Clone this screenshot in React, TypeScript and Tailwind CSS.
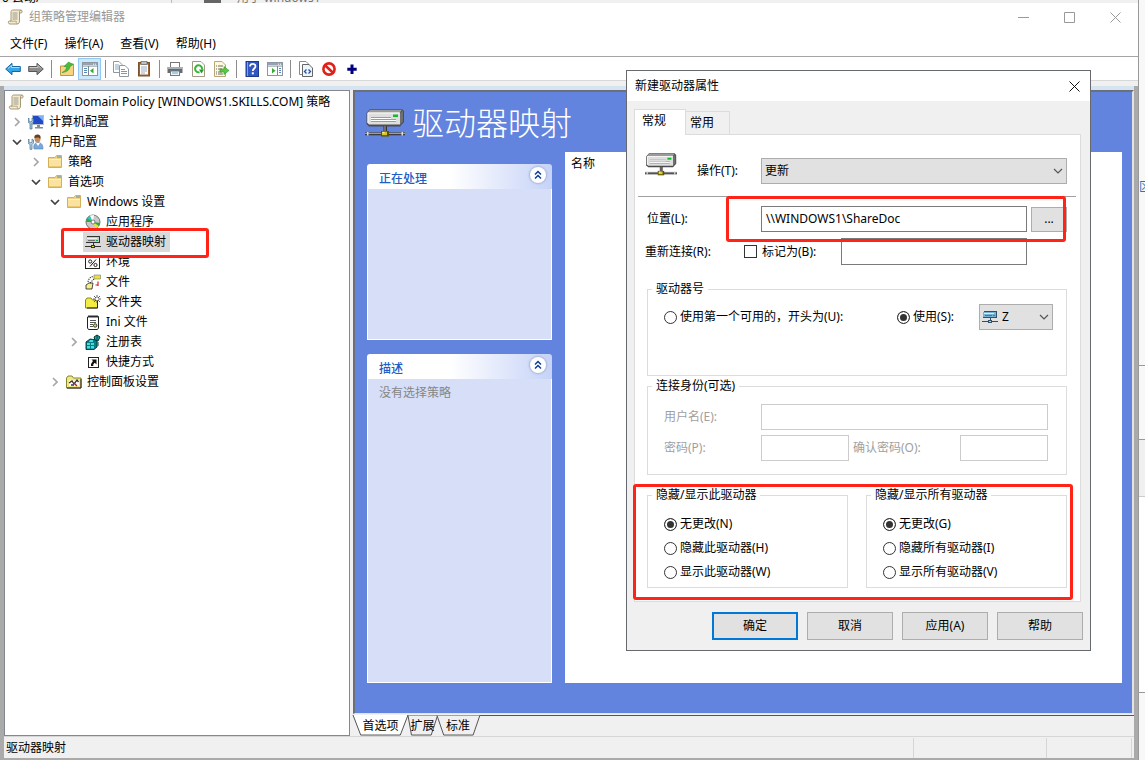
import { useState } from "react";
import type { ReactNode } from "react";

type IconProps = { className?: string };

function DriveIcon({ className = "" }: IconProps) {
  return (
    <svg viewBox="0 0 40 28" className={className} aria-hidden="true">
      <path d="M5 0H37L39 2V13L35 17.5H4L1.5 15V4Z" fill="#4c4c4c" />
      <path d="M5 .7H37L34.5 4H2.5Z" fill="#9b9b9b" />
      <path d="M2.5 3.5H35V15.5H4L2.5 14Z" fill="#dedede" />
      <path d="M35 4L38 1.5V12.5L35 16Z" fill="#6f6f6f" />
      <path d="M3 4H34.5" stroke="#fafafa" strokeWidth="1" />
      <path d="M3 4V14" stroke="#fafafa" strokeWidth="1" />
      <path d="M6 8.5H26M6 10.5H31M6 12.5H31" stroke="#9c9c9c" strokeWidth="1" />
      <path d="M6 9.5H26M6 11.5H31" stroke="#fff" strokeWidth="1" />
      <rect x="28" y="5.5" width="5" height="2.5" fill="#0bbf2b" />
      <rect x="18.5" y="17" width="3.5" height="6" fill="#333" />
      <rect x="19.5" y="17" width="1" height="6" fill="#aaa" />
      <rect x="0" y="23.3" width="40" height="3" fill="#3d3d3d" />
      <rect x="0" y="23.8" width="40" height="1.1" fill="#a9a9a9" />
      <rect x="2" y="23" width="1.5" height="3.5" fill="#ddd" />
      <rect x="36.5" y="23" width="1.5" height="3.5" fill="#ddd" />
      <rect x="16" y="22" width="8" height="5.5" fill="#5c5200" />
      <rect x="17" y="22.7" width="5" height="3.5" fill="#d8c52a" />
      <rect x="17.5" y="23" width="2" height="1.2" fill="#fbf4a0" />
    </svg>
  );
}

function SmallDriveIcon({ className = "", tint = "#c8c8c8", edge = "#333" }: IconProps & { tint?: string; edge?: string }) {
  return (
    <svg viewBox="0 0 16 16" className={className} shapeRendering="crispEdges" aria-hidden="true">
      <path d="M2 2H15V8L14 9H1V3Z" fill={edge} />
      <path d="M1 3H14V8H1Z" fill={tint} />
      <path d="M2 4H12V5H2Z" fill="#fff" opacity=".75" />
      <path d="M3 6H10V7H3Z" fill={edge} opacity=".6" />
      <rect x="11" y="6" width="2" height="1" fill="#0a4" />
      <rect x="8" y="9" width="1" height="3" fill={edge} />
      <rect x="0" y="12" width="16" height="1" fill={edge} />
      <path d="M6 11H10V14H6Z" fill={edge} />
      <rect x="7" y="12" width="2" height="1" fill="#e8e020" />
    </svg>
  );
}

function ScrollIcon({ className = "" }: IconProps) {
  return (
    <svg viewBox="0 0 16 16" className={className} aria-hidden="true">
      <path d="M4 2.5C4 1.5 5 1 6 1H14C15.5 1 15.5 4 14 4H12.5V12C12.5 14 11.5 15 10 15H3C1 15 .7 12 2.5 12H4Z" fill="#f4ecd0" stroke="#9c8f6c" strokeWidth=".9" />
      <path d="M12.5 4V2.5C12.5 1.5 14 1 14.5 2" fill="none" stroke="#9c8f6c" strokeWidth=".8" />
      <path d="M5.5 4H10.5M5.5 6H10.5M5.5 8H10.5M5.5 10H10.5" stroke="#8f9087" strokeWidth=".9" />
      <path d="M3 12.2H9.3C9 13.5 9.3 14.7 10.5 14.8" fill="none" stroke="#b2a57e" strokeWidth=".9" />
    </svg>
  );
}

function FolderIcon({ className = "" }: IconProps) {
  return (
    <svg viewBox="0 0 16 16" className={className} aria-hidden="true">
      <path d="M1.5 3.5H8L9.5 1.5H14.5V13.5H1.5Z" fill="#f3d384" stroke="#d3b05c" />
      <path d="M10 3H14" stroke="#4a90c8" />
      <path d="M2 5H14V13H2Z" fill="#fae2a0" />
      <path d="M2 5.5H14" stroke="#fff2c8" />
      <path d="M2 12.5H14" stroke="#edc76d" />
    </svg>
  );
}

function ComputerIcon({ className = "" }: IconProps) {
  return (
    <svg viewBox="0 0 16 16" className={className} aria-hidden="true">
      <rect x="4.5" y="1.5" width="11" height="9" fill="#2149c8" stroke="#b4bfce" />
      <path d="M10 2L15 2V7Z" fill="#7eb2f5" />
      <path d="M9 11H12V13H15V14.5H7V13H9Z" fill="#7f8c9c" />
      <path d="M1 4V7L3 8L4 7V4L5.5 5V8L4 9.5V15H2V9.5L0 8V5Z" fill="#9fc3dc" stroke="#47718f" strokeWidth=".7" />
    </svg>
  );
}

function UserIcon({ className = "" }: IconProps) {
  return (
    <svg viewBox="0 0 16 16" className={className} aria-hidden="true">
      <path d="M6 15C5 9 8 9 10 8.5C14 9 15 11 15 15Z" fill="#78a9d8" stroke="#4d7fb1" strokeWidth=".6" />
      <ellipse cx="9.5" cy="4.8" rx="3" ry="3.6" fill="#c68e61" />
      <path d="M6.4 4C6 1 8 .5 10 .5C13 .7 13 4 12 5C11 3 9 3.5 6.4 4Z" fill="#604126" />
      <path d="M8 9L10 12L12 9Z" fill="#fff" />
      <path d="M1 5V8L3 9L4 8V5L5.5 6V9L4 10.5V15.3H2V10.5L0 9V6Z" fill="#b1d2e7" stroke="#47718f" strokeWidth=".7" />
    </svg>
  );
}

function DiscIcon({ className = "" }: IconProps) {
  return (
    <svg viewBox="0 0 16 16" className={className} aria-hidden="true">
      <circle cx="8" cy="8" r="7" fill="#c9c9c9" stroke="#555" strokeWidth=".8" />
      <path d="M8 8L2 4L5 1.5Z" fill="#23c7c1" />
      <path d="M8 8L5 1.5L9 1Z" fill="#fff" />
      <path d="M8 8L1 8L2 4Z" fill="#31aa3a" />
      <path d="M8 8L14 12L11 14.5Z" fill="#e8e62a" />
      <path d="M8 8L15 9L14 12Z" fill="#27a83b" />
      <circle cx="8" cy="8" r="2" fill="#fff" stroke="#666" strokeWidth=".8" />
    </svg>
  );
}

function EnvIcon({ className = "" }: IconProps) {
  return (
    <svg viewBox="0 0 16 16" className={className} shapeRendering="crispEdges" aria-hidden="true">
      <path d="M0 1H15V15H0Z" fill="#222" />
      <path d="M0 1H14V3H0Z" fill="#1d2f91" />
      <path d="M1 4H14V14H1Z" fill="#fff" />
      <path d="M5 12.5L11 5.5" stroke="#111" strokeWidth="1" shapeRendering="auto" />
      <circle cx="5.2" cy="7.5" r="1.6" fill="none" stroke="#111" strokeWidth=".9" shapeRendering="auto" />
      <circle cx="10.5" cy="11" r="1.6" fill="none" stroke="#111" strokeWidth=".9" shapeRendering="auto" />
    </svg>
  );
}

function FileIcon({ className = "" }: IconProps) {
  return (
    <svg viewBox="0 0 16 16" className={className} aria-hidden="true">
      <path d="M9 1H15.5V5H9Z" fill="#e8e33a" stroke="#777" strokeWidth=".6" />
      <path d="M1 11L4 9H8L7 15H1Z" fill="#f2ef96" stroke="#222" strokeWidth=".8" />
      <path d="M3 8C4 4 6 2 9 3M5 9L9 5" fill="none" stroke="#333" strokeWidth="1.1" strokeDasharray="1.2 1" />
      <path d="M10.5 11H13M13 7.5V12" stroke="#d9232b" strokeWidth="1.2" />
    </svg>
  );
}

function NewFolderIcon({ className = "" }: IconProps) {
  return (
    <svg viewBox="0 0 16 16" className={className} aria-hidden="true">
      <path d="M.5 6L2 4H6L7.5 6H12.5V14H.5Z" fill="#f2ec43" stroke="#7f7a20" strokeWidth=".9" />
      <path d="M12.5 7V14H2" fill="none" stroke="#222" />
      <path d="M12 1V9M8 5H16M9 2L15 8M15 2L9 8" stroke="#333" strokeWidth=".8" />
      <circle cx="12" cy="5" r="1.3" fill="#fff" />
    </svg>
  );
}

function IniIcon({ className = "" }: IconProps) {
  return (
    <svg viewBox="0 0 16 16" className={className} aria-hidden="true">
      <path d="M3 2.5H13.5V14L12.5 15.5H3.5L2.5 14V3Z" fill="#fff" stroke="#222" />
      <path d="M4 1V4M6 1V4M8 1V4M10 1V4M12 1V4" stroke="#333" />
      <path d="M5 6.5H11M5 8.5H11M5 10.5H8M5 12.5H8" stroke="#444" strokeWidth=".9" />
      <circle cx="10.2" cy="11.5" r="1.7" fill="#e3dd2a" stroke="#333" />
    </svg>
  );
}

function RegistryIcon({ className = "" }: IconProps) {
  return (
    <svg viewBox="0 0 16 16" className={className} aria-hidden="true">
      <path d="M1 8L5 5L12 6V13L9 15.5H1Z" fill="#087f86" stroke="#033" strokeWidth=".9" />
      <path d="M2 9H5V11H2ZM6 9H9V11H6ZM2 12H5V14.5H2ZM6 12H9V14.5H6ZM5 6H8V8H4Z" fill="#43dede" />
      <path d="M9 3L12 1L15 3L13 7L10 6Z" fill="#18a9ad" stroke="#033" />
      <path d="M12 1V6M13 8V12" stroke="#0c3b3b" />
    </svg>
  );
}

function ShortcutIcon({ className = "" }: IconProps) {
  return (
    <svg viewBox="0 0 16 16" className={className} aria-hidden="true">
      <rect x="3.5" y="3.5" width="10" height="10" fill="#fff" stroke="#222" />
      <path d="M6.5 5.5H11.5V10.5L9.8 8.8L8.3 10.3V12H6V10L8 7Z" fill="#111" />
    </svg>
  );
}

function ControlFolderIcon({ className = "" }: IconProps) {
  return (
    <svg viewBox="0 0 16 16" className={className} aria-hidden="true">
      <path d="M.5 4L2 2H6L7.5 4H15V14H.5Z" fill="#efe981" stroke="#8a8434" />
      <path d="M15 5V14H1" fill="none" stroke="#222" />
      <path d="M3 6.5H13V12H3Z" fill="#fff" />
      <path d="M3 9L6 7L8 10L11 6L12.5 8" fill="none" stroke="#333" strokeWidth="1.3" />
      <path d="M8 9L11 12" stroke="#b42438" strokeWidth="1.5" />
      <path d="M5 11H8" stroke="#24318d" strokeWidth="1.5" />
    </svg>
  );
}

function Chevron({ className = "" }: IconProps) {
  return (
    <svg viewBox="0 0 10 6" className={className} aria-hidden="true">
      <path d="M1 1L5 5L9 1" fill="none" stroke="#555" strokeWidth="1.2" />
    </svg>
  );
}

function ToolSvg({ children }: { children: ReactNode }) {
  return (
    <svg viewBox="0 0 16 16" className="h-4 w-4" aria-hidden="true">
      {children}
    </svg>
  );
}

const panelDrawing = (flip: boolean) => (
  <ToolSvg>
    <rect x=".5" y="1.5" width="15" height="13" fill="#fff" stroke="#8d97a0" />
    <rect x="1" y="2" width="14" height="2.5" fill="#97a3af" />
    <path d="M11 3.2H12M13 3.2H14" stroke="#fff" />
    <path d="M1 5.5H15" stroke="#b5c0c9" />
    {flip ? (
      <>
        <path d="M10.5 5V14" stroke="#7d8790" />
        <path d="M12 7.5H14M12 9.5H14M12 11.5H14" stroke="#5787b8" />
        <path d="M5 7L8.5 9.8L5 12.5Z" fill="#36a936" />
      </>
    ) : (
      <>
        <path d="M6.5 5V14" stroke="#7d8790" />
        <path d="M2 7.5H5M2 9.5H5M2 11.5H5" stroke="#5787b8" />
        <path d="M11.5 7L8 9.8L11.5 12.5Z" fill="#36a936" />
      </>
    )}
  </ToolSvg>
);

const toolGroups: { label: string; active?: boolean; icon: ReactNode }[][] = [
  [
    {
      label: "后退",
      icon: (
        <ToolSvg>
          <path d="M.7 8L7 2.3V5.5H15.3V10.5H7V13.7Z" fill="#35a6e8" stroke="#1a669f" />
          <path d="M3 7.5L6.5 4.5V6.5H14.5" fill="none" stroke="#9ddcff" />
        </ToolSvg>
      ),
    },
    {
      label: "前进",
      icon: (
        <ToolSvg>
          <path d="M15.3 8L9 2.3V5.5H.7V10.5H9V13.7Z" fill="#8c8c8c" stroke="#565656" />
          <path d="M1.5 6.5H10V4.5L13 7.5" fill="none" stroke="#c9c9c9" />
        </ToolSvg>
      ),
    },
  ],
  [
    {
      label: "上一级",
      icon: (
        <ToolSvg>
          <path d="M1.5 5H7L8.5 3H14.5V14.5H1.5Z" fill="#f5d583" stroke="#bc9746" />
          <path d="M3 11.5C7 10 7.5 7 7.5 5.5H5L9.5 1L14 3.5L11 5.5C10.5 9 8 11 3 11.5Z" fill="#47bd38" stroke="#28882a" strokeWidth=".5" />
        </ToolSvg>
      ),
    },
    { label: "显示/隐藏控制台树", active: true, icon: panelDrawing(false) },
  ],
  [
    {
      label: "复制",
      icon: (
        <ToolSvg>
          <path d="M.5 .5H6L9 3.5V11.5H.5Z" fill="#fff" stroke="#8c98a3" />
          <path d="M2 4H6M2 6H7M2 8H6" stroke="#7c9dbb" strokeWidth=".9" />
          <path d="M6.5 4.5H12L15.5 8V15.5H6.5Z" fill="#fff" stroke="#8c98a3" />
          <path d="M8 8.5H12M8 10.5H14M8 12.5H14" stroke="#6c9bc8" />
        </ToolSvg>
      ),
    },
    {
      label: "粘贴",
      icon: (
        <ToolSvg>
          <rect x="2.5" y="1.5" width="11" height="13.5" fill="#9a6330" stroke="#7d522a" />
          <rect x="4" y="3.5" width="8" height="10" fill="#fff" />
          <rect x="5" y=".5" width="6" height="3" fill="#c0c0c0" stroke="#666" strokeWidth=".7" />
          <path d="M5 6H11M5 8H11M5 10H11M5 12H9" stroke="#8ba4bd" strokeWidth=".9" />
        </ToolSvg>
      ),
    },
  ],
  [
    {
      label: "打印",
      icon: (
        <ToolSvg>
          <rect x="3.5" y="1.5" width="9" height="5" fill="#fff" stroke="#777" />
          <path d="M.5 6H15.5V12H.5Z" fill="#666b70" />
          <path d="M1 6H15V8H1Z" fill="#a6adb3" />
          <rect x="3.5" y="10" width="9" height="4.5" fill="#eef6fb" stroke="#777" />
          <path d="M5 12H11" stroke="#52a6d4" />
        </ToolSvg>
      ),
    },
    {
      label: "刷新",
      icon: (
        <ToolSvg>
          <path d="M2.5 .5H11L14.5 4V15.5H2.5Z" fill="#fff" stroke="#a49b85" />
          <path d="M9.5 11.2A3.5 3.5 0 1 1 12 8.5" fill="none" stroke="#35b634" strokeWidth="2" />
          <path d="M9 8.5H14L11.5 12.5Z" fill="#259b29" />
        </ToolSvg>
      ),
    },
    {
      label: "导出列表",
      icon: (
        <ToolSvg>
          <path d="M1.5 .5H9L12.5 4V15.5H1.5Z" fill="#fff9dc" stroke="#b4a77a" />
          <path d="M3 5H4M5 5H10M3 8H4M5 8H9M3 11H4M5 11H9M3 13H4M5 13H10" stroke="#6d6d6d" />
          <path d="M7 8H11V5.5L16 9.5L11 13.5V11H7Z" fill="#5bc744" stroke="#34972c" strokeWidth=".6" />
        </ToolSvg>
      ),
    },
  ],
  [
    {
      label: "帮助主题",
      icon: (
        <ToolSvg>
          <rect x="2" y=".5" width="12.5" height="15" fill="#3058c2" stroke="#1d3a92" />
          <path d="M3.5 1V15" stroke="#7ea0ee" />
          <path d="M6 5.5C6 2 11.5 2.3 11.5 5.3C11.5 7.5 8.8 7.5 8.8 10" fill="none" stroke="#fff" strokeWidth="1.8" />
          <rect x="7.8" y="11.3" width="2" height="2" fill="#fff" />
        </ToolSvg>
      ),
    },
    { label: "显示/隐藏操作窗格", icon: panelDrawing(true) },
  ],
  [
    {
      label: "查看 XML",
      icon: (
        <ToolSvg>
          <path d="M1.5 .5H8L11 3.5V13.5H1.5Z" fill="#fff" stroke="#888" />
          <path d="M4.5 3.5H11L14.5 7V15.5H4.5Z" fill="#eef4fc" stroke="#666" />
          <path d="M8.5 8.5L6.5 10.5L8.5 12.5M10.5 8.5L12.5 10.5L10.5 12.5" fill="none" stroke="#2450a8" strokeWidth="1.3" />
        </ToolSvg>
      ),
    },
    {
      label: "停止",
      icon: (
        <ToolSvg>
          <circle cx="8" cy="8" r="5.6" fill="#fff" stroke="#e02118" strokeWidth="2.6" />
          <path d="M4 4.3L12 11.7" stroke="#e02118" strokeWidth="2.6" />
        </ToolSvg>
      ),
    },
    {
      label: "新建",
      icon: (
        <ToolSvg>
          <path d="M8 3.5V13M3.3 8.2H12.7" stroke="#00007f" strokeWidth="3" />
        </ToolSvg>
      ),
    },
  ],
];

type Node = {
  label: string;
  level: 1 | 2 | 3 | 4;
  state?: "open" | "closed";
  selected?: boolean;
  Icon: (p: IconProps) => ReactNode;
};

const nodes: Node[] = [
  { label: "计算机配置", level: 1, state: "closed", Icon: ComputerIcon },
  { label: "用户配置", level: 1, state: "open", Icon: UserIcon },
  { label: "策略", level: 2, state: "closed", Icon: FolderIcon },
  { label: "首选项", level: 2, state: "open", Icon: FolderIcon },
  { label: "Windows 设置", level: 3, state: "open", Icon: FolderIcon },
  { label: "应用程序", level: 4, Icon: DiscIcon },
  { label: "驱动器映射", level: 4, selected: true, Icon: SmallDriveIcon },
  { label: "环境", level: 4, Icon: EnvIcon },
  { label: "文件", level: 4, Icon: FileIcon },
  { label: "文件夹", level: 4, Icon: NewFolderIcon },
  { label: "Ini 文件", level: 4, Icon: IniIcon },
  { label: "注册表", level: 4, state: "closed", Icon: RegistryIcon },
  { label: "快捷方式", level: 4, Icon: ShortcutIcon },
  { label: "控制面板设置", level: 3, state: "closed", Icon: ControlFolderIcon },
];

const indent = { 1: "pl-1", 2: "pl-[23px]", 3: "pl-[42px]", 4: "pl-[61px]" };

function TreeRow({ node }: { node: Node }) {
  return (
    <li className={`relative flex h-5 items-center ${indent[node.level]}`}>
      <span className="mr-px flex w-4 shrink-0 justify-center">
        {node.state === "open" && (
          <svg viewBox="0 0 10 6" className="h-1.5 w-2.5" aria-hidden="true">
            <path d="M1 1L5 5L9 1" fill="none" stroke="#404040" strokeWidth="1.7" />
          </svg>
        )}
        {node.state === "closed" && (
          <svg viewBox="0 0 6 10" className="h-2.5 w-1.5" aria-hidden="true">
            <path d="M1 1L5 5L1 9" fill="none" stroke="#a6a6a6" strokeWidth="1.6" />
          </svg>
        )}
      </span>
      <span className={`flex h-5 items-center gap-1 whitespace-nowrap pl-0.5 pr-1 ${node.selected ? "bg-[#d9d9d9]" : ""}`}>
        <node.Icon className="h-4 w-4" />
        <span className="pl-px">{node.label}</span>
      </span>
      {node.selected && (
        <span className="pointer-events-none absolute -top-1 left-14 z-10 h-[30px] w-[148px] rounded-[3px] border-3 border-[#ff2318]" />
      )}
    </li>
  );
}

function InfoPanel({ title, children, className = "" }: { title: string; children?: ReactNode; className?: string }) {
  return (
    <section className={`flex flex-col ${className}`}>
      <header className="flex h-[25px] items-start justify-between rounded-t-[3px] bg-linear-to-r from-white from-45% to-[#c6d3f7] pl-3 pr-1.5 pt-[3px]">
        <h2 className="pt-1 font-medium text-[#215dc6]">{title}</h2>
        <button aria-label={`折叠${title}`} className="flex h-4 w-4 items-center justify-center rounded-full bg-white shadow-[0_0_2px_1px_#a5b3d6]">
          <svg viewBox="0 0 10 10" className="h-2.5 w-2.5" aria-hidden="true">
            <path d="M2 4.5L5 1.5L8 4.5M2 8.5L5 5.5L8 8.5" fill="none" stroke="#0c3d9b" strokeWidth="1.5" />
          </svg>
        </button>
      </header>
      <div className="flex-1 border border-t-0 border-white bg-[#d6dff7] px-[11px] py-1 text-[#868686]">{children}</div>
    </section>
  );
}

function Radio({ id, name, label, checked, className = "" }: { id: string; name: string; label: string; checked?: boolean; className?: string }) {
  return (
    <div className={`flex items-center gap-[3px] whitespace-nowrap ${className}`}>
      <input
        id={id}
        type="radio"
        name={name}
        defaultChecked={checked}
        className="h-[13px] w-[13px] shrink-0 appearance-none rounded-full border border-[#333] bg-white checked:bg-[#333] checked:shadow-[inset_0_0_0_2px_white]"
      />
      <label htmlFor={id}>{label}</label>
    </div>
  );
}

const fieldset = "min-w-0 border border-[#dcdcdc]";
const legend = "ml-1 h-4 px-1 leading-4";
const textInput = "border bg-white px-1 outline-none";

function DriveDialog() {
  const [tab, setTab] = useState(0);
  return (
    <div role="dialog" aria-labelledby="dialog-title" className="absolute left-[626px] top-[70px] w-[465px] border border-[#666a6e] bg-[#f0f0f0]">
      <div className="flex h-[30px] items-center justify-between bg-white pl-2 pr-2.5">
        <h2 id="dialog-title">新建驱动器属性</h2>
        <button aria-label="关闭">
          <svg viewBox="0 0 11 11" className="h-[11px] w-[11px]" aria-hidden="true">
            <path d="M.5 .5L10.5 10.5M10.5 .5L.5 10.5" stroke="#111" />
          </svg>
        </button>
      </div>

      <div role="tablist" className="flex items-end pl-[7px] pt-2">
        {["常规", "常用"].map((name, i) => (
          <button
            key={name}
            role="tab"
            aria-selected={tab === i}
            onClick={() => setTab(i)}
            className={
              tab === i
                ? "relative z-10 -mb-px h-[26px] w-[52px] border border-b-0 border-[#dcdcdc] bg-white pb-1 pl-[7px] text-left"
                : "h-[23px] w-11 border border-b-0 border-l-0 border-[#dcdcdc] bg-[#f0f0f0] pl-1 text-left"
            }
          >
            {name}
          </button>
        ))}
      </div>

      <div className="ml-[7px] mr-[9px] border border-[#dcdcdc] bg-white pb-[13px]">
        <div className="flex h-[61px] items-center pl-2.5 pr-[13px] pt-2.5">
          <DriveIcon className="mb-3 h-[23px] w-8" />
          <label htmlFor="action" className="ml-5 w-16">操作(T):</label>
          <div className="relative flex-1">
            <select id="action" className="h-[26px] w-full appearance-none border border-[#adadad] bg-[#e1e1e1] pl-[3px]">
              <option>更新</option>
            </select>
            <Chevron className="pointer-events-none absolute right-1 top-2.5 h-1.5 w-2.5" />
          </div>
        </div>
        <hr className="ml-[3px] mr-1 border-[#a0a0a0]" />

        <div className="relative flex items-center pl-2.5 pr-[13px] pt-[9px]">
          <label htmlFor="location" className="w-[116px] pl-0.5">位置(L):</label>
          <input id="location" defaultValue="\\WINDOWS1\ShareDoc" className={`h-[26px] w-[266px] border-[#7a7a7a] pb-0.5 ${textInput}`} />
          <button className="ml-1 h-[25px] flex-1 border border-[#adadad] bg-[#e1e1e1]">...</button>
          <span className="pointer-events-none absolute -top-px left-[91px] z-10 h-[46px] w-[340px] rounded-[3px] border-3 border-[#ff2318]" />
        </div>

        <div className="flex items-center pl-2.5 pt-1.5">
          <span className="w-[99px]">重新连接(R):</span>
          <input id="mark" type="checkbox" aria-label="标记" className="h-[13px] w-[13px] appearance-none border border-[#333] bg-white checked:bg-[#333]" />
          <label htmlFor="mark-text" className="w-[84px] pl-[5px]">标记为(B):</label>
          <input id="mark-text" className={`h-[27px] w-[186px] border-[#7a7a7a] ${textInput}`} />
        </div>

        <fieldset className={`ml-3 mr-[13px] mt-4 h-[95px] ${fieldset}`}>
          <legend className={legend}>驱动器号</legend>
          <div className="flex items-center pl-4 pt-[7px]">
            <Radio id="first" name="letter" label="使用第一个可用的，开头为(U):" className="w-[233px]" />
            <Radio id="use" name="letter" label="使用(S):" checked className="w-[82px]" />
            <div className="relative">
              <select aria-label="驱动器号" className="h-[26px] w-[74px] appearance-none border border-[#adadad] bg-[#e1e1e1] pl-[22px]">
                <option>Z</option>
              </select>
              <SmallDriveIcon tint="#79b2d2" edge="#2b5268" className="pointer-events-none absolute left-[3px] top-[5px] h-4 w-4" />
              <Chevron className="pointer-events-none absolute right-1 top-2.5 h-1.5 w-2.5" />
            </div>
          </div>
        </fieldset>

        <fieldset disabled className={`ml-3 mr-[13px] mt-0.5 h-[97px] text-[#a0a0a0] ${fieldset}`}>
          <legend className={`text-black ${legend}`}>连接身份(可选)</legend>
          <div className="flex items-center pl-4 pt-2.5">
            <label htmlFor="user" className="w-[97px]">用户名(E):</label>
            <input id="user" className={`h-[26px] w-[287px] border-[#ccc] ${textInput}`} />
          </div>
          <div className="flex items-center pl-4 pt-[5px]">
            <label htmlFor="pw" className="w-[97px]">密码(P):</label>
            <input id="pw" type="password" className={`h-[26px] w-[88px] border-[#ccc] ${textInput}`} />
            <label htmlFor="pw2" className="w-[111px] pl-1">确认密码(O):</label>
            <input id="pw2" type="password" className={`h-[26px] w-[88px] border-[#ccc] ${textInput}`} />
          </div>
        </fieldset>

        <div className="relative ml-3 mr-[13px] mt-3 grid grid-cols-2 gap-[18px]">
          <fieldset className={`h-[101px] ${fieldset}`}>
            <legend className={legend}>隐藏/显示此驱动器</legend>
            <div className="pl-4 pt-[9px]">
              <Radio id="n" name="this" label="无更改(N)" checked className="h-6" />
              <Radio id="h" name="this" label="隐藏此驱动器(H)" className="h-6" />
              <Radio id="w" name="this" label="显示此驱动器(W)" className="h-6" />
            </div>
          </fieldset>
          <fieldset className={`h-[101px] ${fieldset}`}>
            <legend className={legend}>隐藏/显示所有驱动器</legend>
            <div className="pl-4 pt-[9px]">
              <Radio id="g" name="all" label="无更改(G)" checked className="h-6" />
              <Radio id="i" name="all" label="隐藏所有驱动器(I)" className="h-6" />
              <Radio id="v" name="all" label="显示所有驱动器(V)" className="h-6" />
            </div>
          </fieldset>
          <span className="pointer-events-none absolute -left-3.5 -right-1.5 -bottom-3 -top-[3px] z-10 rounded-[3px] border-3 border-[#ff2318]" />
        </div>
      </div>

      <div className="flex justify-end gap-[9px] py-2.5 pr-[7px]">
        {["确定", "取消", "应用(A)", "帮助"].map((name, i) => (
          <button key={name} className={`h-7 w-[86px] bg-[#e1e1e1] ${i === 0 ? "border-2 border-[#0078d7]" : "border border-[#adadad]"}`}>
            {name}
          </button>
        ))}
      </div>
    </div>
  );
}

const viewTabs = [
  { name: "首选项", width: "w-[55px]", fill: "#fff", outline: "M0 0L7 21H43L50 0" },
  { name: "扩展", width: "w-[29px]", fill: "#f0f0f0", outline: "M0 .5L6 21H40L51 .5" },
  { name: "标准", width: "w-[42px]", fill: "#f0f0f0", outline: "M0 .5L8 21H43L51 .5" },
];

export default function App() {
  return (
    <div className="relative flex h-screen min-h-[700px] overflow-hidden bg-[#f0f0f0] font-['Noto_Sans','Noto_Sans_CJK_SC',sans-serif] text-xs leading-4 text-black">
      <div className="flex min-w-0 flex-1 flex-col">
        <div className="flex h-[3px] shrink-0 overflow-hidden bg-[#f0f0f0]" aria-hidden="true">
          <span className="-mt-2.5 w-[172px] whitespace-nowrap border-r border-[#bbb] pl-0.5">0 去动/</span>
          <span className="ml-8 w-[17px] bg-[#666]" />
          <span className="-mt-2.5 ml-4 whitespace-nowrap text-[#777]">用于 windows1</span>
        </div>

        <header className="flex h-7 shrink-0 items-center bg-white pl-[7px] text-[#999]">
          <ScrollIcon className="h-4 w-4" />
          <h1 className="ml-1.5 flex-1">组策略管理编辑器</h1>
          <div className="flex">
            {["M0 5.5H11", "M.5 .5H10.5V10.5H.5Z", "M.5 .5L10.5 10.5M10.5 .5L.5 10.5"].map((d, i) => (
              <button key={d} aria-label={["最小化", "最大化", "关闭"][i]} className="flex h-7 w-[46px] items-center justify-center">
                <svg viewBox="0 0 11 11" className="h-[11px] w-[11px]" aria-hidden="true">
                  <path d={d} fill="none" stroke="#999" />
                </svg>
              </button>
            ))}
          </div>
        </header>

        <nav className="flex h-[25px] shrink-0 items-center gap-[17px] bg-white pl-2.5 pt-px">
          {["文件(F)", "操作(A)", "查看(V)", "帮助(H)"].map((m) => (
            <button key={m}>{m}</button>
          ))}
        </nav>

        <div role="toolbar" className="flex h-[25px] shrink-0 items-center border-y border-t-[#a5a5a5] border-b-[#d8d8d8] bg-white pl-px">
          {toolGroups.map((group, g) => (
            <div key={g} className="flex items-center">
              {g > 0 && (
                <span className="flex w-2 justify-center">
                  <span className="h-[18px] w-px bg-[#8c8c8c]" />
                </span>
              )}
              {group.map((t) => (
                <button
                  key={t.label}
                  aria-label={t.label}
                  className={`flex h-[22px] w-[23px] items-center justify-center ${t.active ? "border border-[#90c8f6] bg-[#cce8ff]" : ""}`}
                >
                  {t.icon}
                </button>
              ))}
            </div>
          ))}
        </div>

        <div className="mt-[5px] flex min-h-0 flex-1 flex-col border-x-4 border-b-2 border-[#aaa] bg-[#f0f0f0]">
          <div className="h-1 shrink-0 bg-[#d6e4f2]" />
          <div className="flex min-h-0 flex-1 gap-[3px]">
            <aside className="w-[346px] shrink-0 border border-[#828790] bg-white pt-px">
              <div className="flex h-5 items-center gap-1.5 whitespace-nowrap pl-[3px]">
                <ScrollIcon className="h-4 w-4" />
                <span>Default Domain Policy [WINDOWS1.SKILLS.COM] 策略</span>
              </div>
              <ul>
                {nodes.map((n) => (
                  <TreeRow key={n.label} node={n} />
                ))}
              </ul>
            </aside>

            <main className="flex min-w-0 flex-1 flex-col">
              <div className="flex min-h-0 flex-1 flex-col border-2 border-b border-[#6b6f78] border-b-[#e3e3e3] border-r-[#e3e3e3] bg-[#6384de] pb-[30px] pl-3 pr-2.5">
                <div className="-ml-0.5 flex h-[60px] shrink-0 items-center gap-[7px] pt-px">
                  <DriveIcon className="h-7 w-10" />
                  <h2 className="whitespace-nowrap text-[32px] font-light leading-[60px] text-white">驱动器映射</h2>
                </div>
                <div className="flex min-h-0 flex-1 gap-[13px]">
                  <div className="flex w-[185px] shrink-0 flex-col gap-3.5 pt-3">
                    <InfoPanel title="正在处理" className="h-44" />
                    <InfoPanel title="描述" className="flex-1">
                      <p className="pt-0.5">没有选择策略</p>
                    </InfoPanel>
                  </div>
                  <div className="flex-1 bg-white px-1.5 py-1">名称</div>
                </div>
              </div>
              <div className="mt-px flex h-[21px] shrink-0 border-t border-[#555]">
                {viewTabs.map((t) => (
                  <button key={t.name} className={`relative -mt-px h-[21px] whitespace-nowrap ${t.width}`}>
                    <svg viewBox="0 0 50 22" preserveAspectRatio="none" className="absolute inset-0 h-full w-full overflow-visible" aria-hidden="true">
                      <path d={t.outline} fill={t.fill} stroke="#555" vectorEffect="non-scaling-stroke" />
                    </svg>
                    <span className="relative">{t.name}</span>
                  </button>
                ))}
              </div>
            </main>
          </div>
          <footer className="flex h-[22px] shrink-0 items-center border-t border-[#d6d6d6] pl-0.5">
            <span className="flex-1">驱动器映射</span>
            <span className="h-5 w-[133px] border-l border-[#d6d6d6]" />
            <span className="mr-0.5 h-5 w-[86px] border-x border-[#d6d6d6]" />
          </footer>
        </div>
      </div>

      <div className="flex w-[7px] shrink-0 flex-col overflow-hidden border-l border-[#999] bg-[#f8f8f8]" aria-hidden="true">
        <span className="mt-[179px] h-[186px] w-3 text-[#2673c0]">区</span>
        <span className="h-[74px] border-t border-[#999]" />
        <span className="h-[58px] border-y border-t-[#999] border-b-[#ccc] bg-[#f0f0f0]" />
        <span className="h-[196px] border-b border-[#999] bg-white" />
      </div>

      <DriveDialog />
    </div>
  );
}
